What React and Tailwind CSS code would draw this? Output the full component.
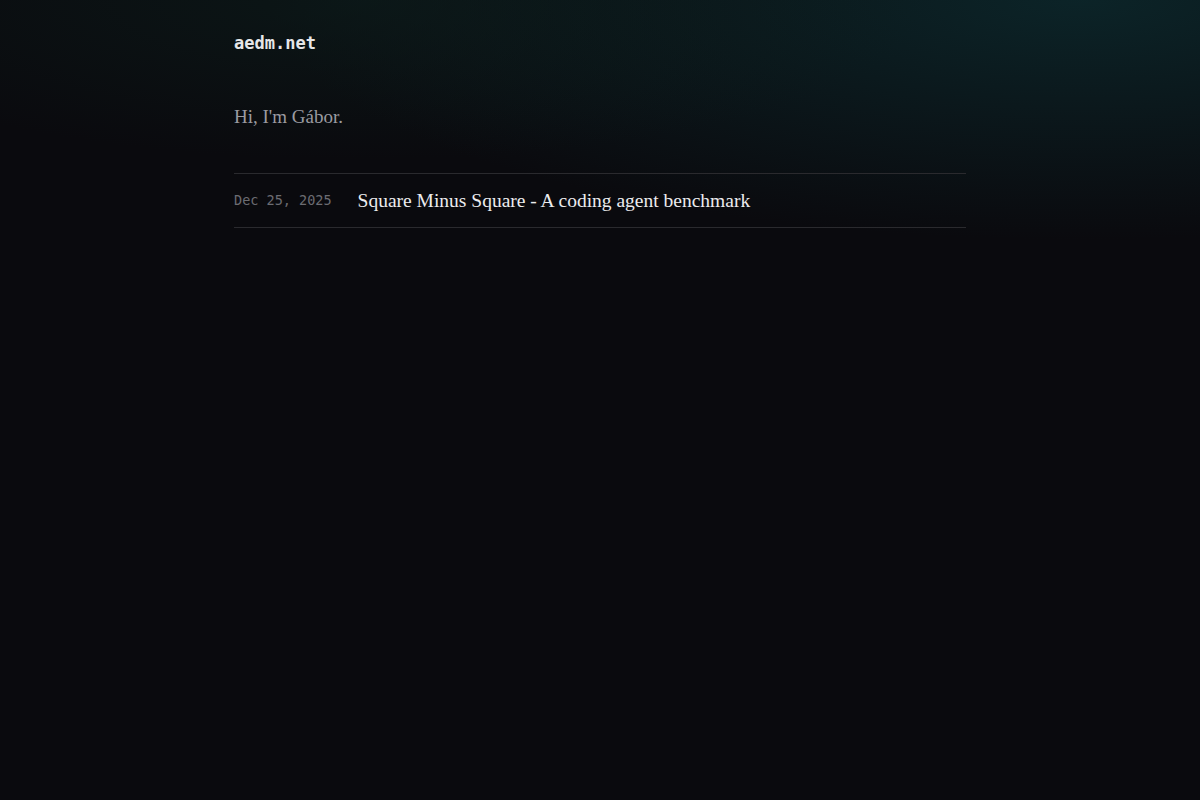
import React from 'react';

const posts = [
  { date: 'Dec 25, 2025', title: 'Square Minus Square - A coding agent benchmark', href: '#' },
];

const mono = { fontFamily: '"DejaVu Sans Mono", "Liberation Mono", monospace' };

export default function App() {
  return (
    <div className="relative min-h-[800px] w-full overflow-hidden bg-[#0a0a0e]">
      {/* teal glow along the top edge */}
      <div className="pointer-events-none absolute inset-0 bg-[radial-gradient(ellipse_90%_40%_at_90%_0%,rgba(12,40,44,0.85),transparent_75%)]" />
      <div className="pointer-events-none absolute inset-0 bg-[radial-gradient(ellipse_60%_25%_at_30%_0%,rgba(12,30,28,0.6),transparent_80%)]" />

      <main className="relative mx-auto w-[732px] pt-[31px]">
        <header>
          <a href="#" className="text-[17px] font-bold leading-[24px] text-[#e6e6e8]" style={mono}>
            aedm.net
          </a>
        </header>

        <p className="mt-[50px] text-[19px] leading-[24px] text-[#9b9ba1] font-['Liberation_Serif',serif]">
          Hi, I'm Gábor.
        </p>

        <ul className="mt-[44px] border-t border-[#2a2a2e]">
          {posts.map((p) => (
            <li key={p.title} className="flex h-[54px] items-center gap-[26px] border-b border-[#2a2a2e]">
              <span className="text-[13.5px] text-[#6c6c72]" style={mono}>
                {p.date}
              </span>
              <a href={p.href} className="text-[19.5px] text-[#ececee] font-['Liberation_Serif',serif]">
                {p.title}
              </a>
            </li>
          ))}
        </ul>
      </main>
    </div>
  );
}
